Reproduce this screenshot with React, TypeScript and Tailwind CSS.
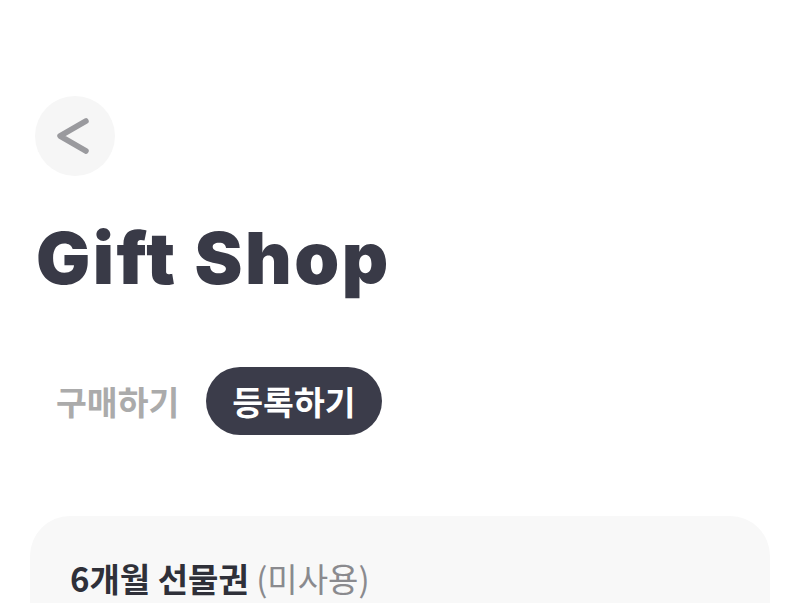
import React from 'react';

const App: React.FC = () => {
  return (
    <div
      className="h-[603px] w-[800px] overflow-hidden bg-white"
      style={{ fontFamily: 'Inter, "Noto Sans CJK KR", sans-serif' }}
    >
      <div className="pl-[35px] pt-[96px]">
        <button className="flex h-[80px] w-[80px] items-center justify-center rounded-full bg-[#f6f6f6]">
          <svg width="40" height="40" viewBox="0 0 40 40" fill="none">
            <path
              d="M31 5 L5 20 L31 35"
              stroke="#9a9a9e"
              strokeWidth="5.5"
              strokeLinecap="round"
              strokeLinejoin="round"
            />
          </svg>
        </button>
      </div>

      <h1 className="mt-[46px] pl-[36px] text-[72px] font-black leading-none tracking-[2.5px] text-[#393a47]">
        Gift Shop
      </h1>

      <div className="mt-[73px] flex items-center gap-[27px] pl-[56px]">
        <span
          className="text-[33.5px] font-bold text-[#ababab]"
          style={{ fontFamily: '"Noto Sans CJK KR", sans-serif' }}
        >
          구매하기
        </span>
        <span
          className="flex h-[68px] items-center rounded-full bg-[#3b3c4a] px-[26px] text-[33.5px] font-bold text-white"
          style={{ fontFamily: '"Noto Sans CJK KR", sans-serif' }}
        >
          등록하기
        </span>
      </div>

      <div className="mx-[30px] mt-[81px] h-[200px] rounded-[40px] bg-[#f8f8f8] px-[40px] pt-[46px]">
        <p
          className="text-[33px] leading-none text-[#2f3039]"
          style={{ fontFamily: '"Noto Sans CJK KR", sans-serif' }}
        >
          <span className="font-bold">6개월 선물권</span>{' '}
          <span className="font-normal text-[#8a8a8e]">(미사용)</span>
        </p>
      </div>
    </div>
  );
};

export default App;
